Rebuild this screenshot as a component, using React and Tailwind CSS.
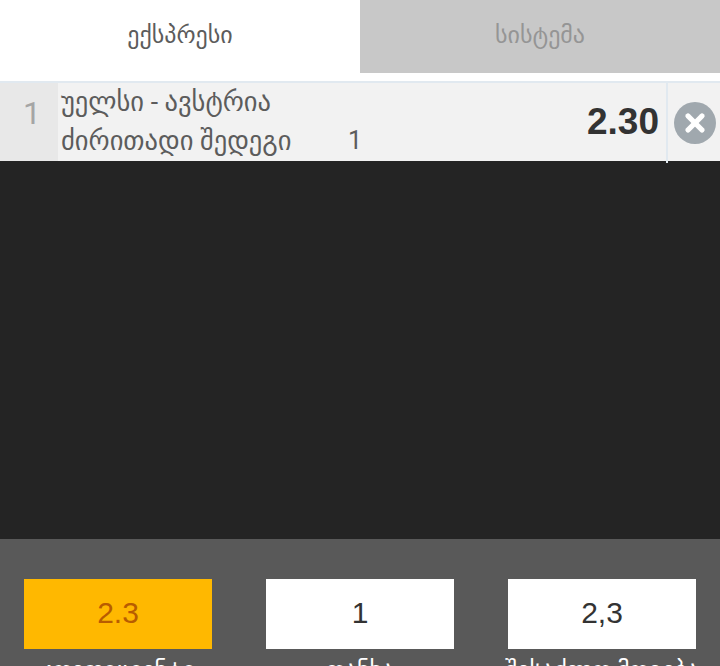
import { X } from 'lucide-react';

const stats = [
  { value: '2.3', label: 'კოეფიციენტი', box: 'bg-[#ffb800] text-[#b85c00]' },
  { value: '1', label: 'თანხა', box: 'bg-white text-[#333333]' },
  { value: '2,3', label: 'შესაძლო მოგება', box: 'bg-white text-[#333333]' },
];

export default function App() {
  return (
    <div className="w-[720px] h-[666px] overflow-hidden flex flex-col bg-[#242424] font-['Roboto','Noto_Sans','DejaVu_Sans',sans-serif]">
      <div className="bg-white h-[83px] shrink-0 border-b-2 border-[#e1e9f0]">
        <div className="flex h-[73px]">
          <div className="w-1/2 flex items-center justify-center pb-[4px] text-[24px] text-[#5c5c5c]">ექსპრესი</div>
          <div className="w-1/2 flex items-center justify-center pb-[4px] text-[24px] text-[#959595] bg-[#c8c8c8]">სისტემა</div>
        </div>
      </div>

      <div className="flex h-[78px] shrink-0 bg-[#f2f2f2]">
        <div className="w-[58px] flex items-center justify-center pl-[6px] pb-[18px] bg-[#e8e8e8] text-[32px] text-[#a5a5a5]">1</div>
        <div className="flex-1 pl-[3px] -mt-[1px] text-[26.5px] leading-[39px] text-[#5c5c5c]">
          <div>უელსი - ავსტრია</div>
          <div className="flex">
            <span className="w-[287px] shrink-0">ძირითადი შედეგი</span>
            <span className="text-[25px]">1</span>
          </div>
        </div>
        <div className="flex items-center pr-[7px] text-[37px] font-bold text-[#333333] font-['Liberation_Sans',sans-serif]">2.30</div>
        <div className="w-[54px] h-[80px] flex items-center justify-center border-l-2 border-[#e1e9f0] pl-[1px]">
          <div className="w-[42px] h-[42px] rounded-full bg-[#a0a8ae] flex items-center justify-center">
            <X className="w-[28px] h-[28px] text-white" strokeWidth={4.5} />
          </div>
        </div>
      </div>

      <div className="flex-1" />

      <div className="h-[127px] shrink-0 bg-[#595959] px-[24px] pt-[40px] flex justify-between">
        {stats.map((item) => (
          <div key={item.label} className="w-[188px] flex flex-col items-center">
            <div className={`w-full h-[70px] shrink-0 flex items-center justify-center pb-[4px] text-[30px] font-['Liberation_Sans',sans-serif] ${item.box}`}>
              {item.value}
            </div>
            <div className="mt-[6px] text-[24px] leading-[30px] text-white whitespace-nowrap">{item.label}</div>
          </div>
        ))}
      </div>
    </div>
  );
}
